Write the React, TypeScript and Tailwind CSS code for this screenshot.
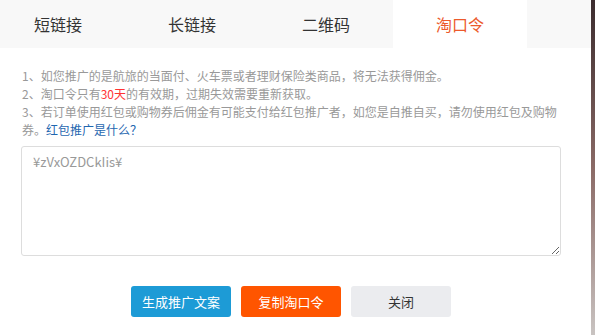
import { useState } from 'react';

const tabs = ['短链接', '长链接', '二维码', '淘口令'];

export default function App() {
  const [active, setActive] = useState(3);

  return (
    <div
      className="flex h-[335px] w-[595px] overflow-hidden bg-white"
      style={{ fontFamily: '"Noto Sans CJK SC", "Noto Sans", sans-serif' }}
    >
      <div className="flex w-[591px] flex-col">
        {/* Tabs */}
        <div className="flex h-[48px] bg-[#f8f8f8]">
          {tabs.map((t, i) => (
            <button
              key={t}
              onClick={() => setActive(i)}
              className={`flex h-full items-center text-[16px] leading-none ${
                i === 0 ? 'pl-[34px] pr-[43px]' : 'px-[43px]'
              } ${i === active ? 'bg-white text-[#ec5a2c]' : 'text-[#333]'}`}
            >
              {t}
            </button>
          ))}
        </div>

        {/* Notes */}
        <div className="px-[22px] pt-[19px] text-[12px] leading-[18px] text-[#999]">
          <p>1、如您推广的是航旅的当面付、火车票或者理财保险类商品，将无法获得佣金。</p>
          <p>
            2、淘口令只有<span className="text-[#f33]">30天</span>的有效期，过期失效需要重新获取。
          </p>
          <p className="w-[540px]">
            3、若订单使用红包或购物券后佣金有可能支付给红包推广者，如您是自推自买，请勿使用红包及购物券。
            <a className="text-[#1f67b0]">红包推广是什么？</a>
          </p>
        </div>

        {/* Code box */}
        <div className="pl-[21px] pt-[7px]">
          <textarea
            readOnly
            defaultValue="¥zVxOZDCkIis¥"
            className="block h-[110px] w-[540px] rounded-[3px] border border-[#ddd] px-[11px] py-[5px] text-[13px] leading-[20px] text-[#999] outline-none"
          />
        </div>

        {/* Actions */}
        <div className="flex gap-[10px] pl-[131px] pt-[30px] text-[13px]">
          <button className="h-[31px] w-[100px] rounded-[3px] bg-[#1d9bd6] text-white">生成推广文案</button>
          <button className="h-[31px] w-[100px] rounded-[3px] bg-[#ff5500] text-white">复制淘口令</button>
          <button className="h-[31px] w-[100px] rounded-[3px] bg-[#ebecef] text-[#333]">关闭</button>
        </div>
      </div>

      {/* page behind the dialog */}
      <div className="w-[4px] bg-gradient-to-b from-[#3b2c2e] via-[#8a6a66] to-[#c9c4c2]" />
    </div>
  );
}
